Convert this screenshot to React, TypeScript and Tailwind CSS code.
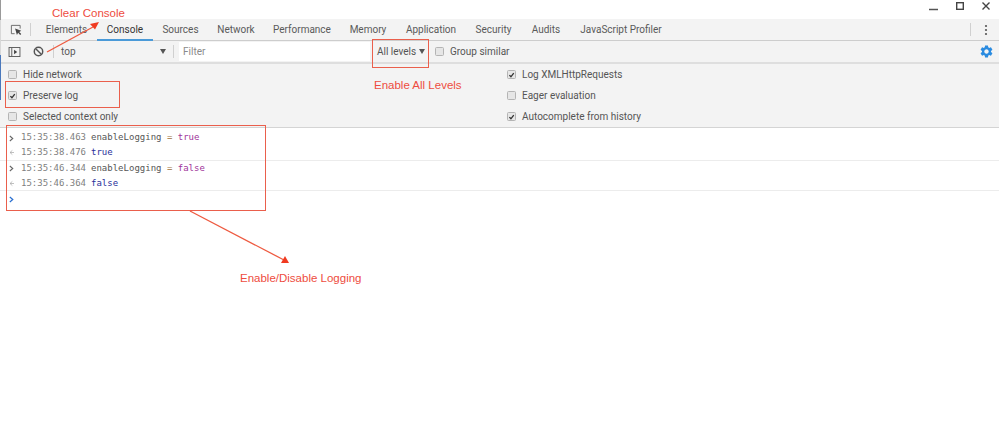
import { useState } from "react";

const TABS = ["Elements", "Console", "Sources", "Network", "Performance", "Memory", "Application", "Security", "Audits", "JavaScript Profiler"];

const tabWidth: Record<string, string> = {
  Elements: "w-[61px]",
  Console: "w-[56px]",
  Sources: "w-[55px]",
  Network: "w-[56px]",
  Performance: "w-[76px]",
  Memory: "w-[56px]",
  Application: "w-[70px]",
  Security: "w-[55px]",
  Audits: "w-[50px]",
  "JavaScript Profiler": "w-[100px]",
};

function Check({ label, checked }: { label: string; checked?: boolean }) {
  return (
    <div className="flex items-center h-[21px] gap-[6px] text-[10px] text-[#555]">
      <span className="flex items-center justify-center w-[9px] h-[9px] rounded-[1.5px] border border-[#b4b4b4] bg-[#e6e6e6]">
        {checked && (
          <svg viewBox="0 0 10 10" className="w-[8px] h-[8px]">
            <path d="M2 5.2 4.2 7.6 8.2 2.4" fill="none" stroke="#333" strokeWidth="1.9" />
          </svg>
        )}
      </span>
      <span className="whitespace-nowrap">{label}</span>
    </div>
  );
}

function Caret() {
  return (
    <svg viewBox="0 0 6 5" className="w-[6px] h-[5px]">
      <path d="M0 0H6L3 5Z" fill="#555" />
    </svg>
  );
}

function LogRow({ time, kind, children, last }: { time: string; kind: "in" | "out"; children: React.ReactNode; last?: boolean }) {
  return (
    <div className={`flex items-center pt-px ${last ? "h-[15.5px] border-b border-[#ececec]" : "h-[15px]"}`}>
      <span className="w-[21px] pl-[9px]">
        {kind === "in" ? (
          <svg viewBox="0 0 6 8" className="w-[5px] h-[7px]">
            <path d="M1 1 4.5 4 1 7" fill="none" stroke="#666" strokeWidth="1.3" />
          </svg>
        ) : (
          <svg viewBox="0 0 6 8" className="w-[5px] h-[7px]">
            <path d="M4 1.5 1.2 4 4 6.5M1.2 4H6" fill="none" stroke="#aaa" strokeWidth="0.9" />
          </svg>
        )}
      </span>
      <span className="text-[#808080] mr-[5px]">{time}</span>
      {children}
    </div>
  );
}

export default function App() {
  const [filter, setFilter] = useState("");

  return (
    <div className="relative w-[999px] h-[436px] overflow-hidden bg-white font-['Roboto',sans-serif]">
      {/* window buttons */}
      <div className="flex h-[19px] items-start justify-end bg-white">
        <svg viewBox="0 0 80 19" className="w-[80px] h-[19px]">
          <path d="M10 9.5H19" stroke="#555" strokeWidth="1.5" />
          <rect x="37.7" y="2.7" width="6.6" height="6.6" fill="none" stroke="#444" strokeWidth="1.4" />
          <path d="M63.5 2.5 70.5 9.5M70.5 2.5 63.5 9.5" stroke="#444" strokeWidth="1.4" />
        </svg>
      </div>

      {/* tab strip */}
      <div className="flex items-stretch h-[22px] bg-[#f3f3f3] border-b border-[#cdcdcd]">
        <div className="flex items-center w-[30px] shrink-0 pl-[10px]">
          <svg viewBox="0 0 13 13" className="w-[12px] h-[12px]">
            <path d="M5 10.5H1.5V1.5H11V5" fill="none" stroke="#666" strokeWidth="1" />
            <path d="M5.5 5 7.5 12 8.8 9.6 11 12 12.2 10.8 10 8.6 12.2 7.4Z" fill="#444" />
          </svg>
        </div>
        <div className="w-px h-[13px] self-center bg-[#d0d0d0]" />
        <div className="flex w-[5px] shrink-0" />
        {TABS.map((t) => (
          <div
            key={t}
            className={`flex items-center justify-center text-[10px] whitespace-nowrap ${tabWidth[t]} ${
              t === "Console" ? "text-[#333] border-b-2 border-[#4a9ad8] -mb-px" : "text-[#5a5a5a]"
            }`}
          >
            {t}
          </div>
        ))}
        <div className="flex-1" />
        <div className="w-px h-[13px] self-center bg-[#d0d0d0]" />
        <div className="flex items-center justify-center w-[28px] pl-[2px]">
          <svg viewBox="0 0 4 12" className="w-[4px] h-[12px]">
            <circle cx="2" cy="2" r="1.1" fill="#555" />
            <circle cx="2" cy="6" r="1.1" fill="#555" />
            <circle cx="2" cy="10" r="1.1" fill="#555" />
          </svg>
        </div>
      </div>

      {/* console toolbar */}
      <div className="flex items-center h-[23px] bg-[#f3f3f3] border-b-2 border-[#dedede]">
        <div className="flex items-center w-[33px] shrink-0 pl-[8px]">
          <svg viewBox="0 0 13 11" className="w-[13px] h-[10px]">
            <rect x="0.5" y="0.5" width="12" height="10" fill="none" stroke="#555" />
            <path d="M3.5 1V10" stroke="#555" />
            <path d="M6 3 9.5 5.5 6 8Z" fill="#444" />
          </svg>
        </div>
        <svg viewBox="0 0 12 12" className="w-[11px] h-[11px]">
          <circle cx="6" cy="6" r="4.6" fill="none" stroke="#555" strokeWidth="1.6" />
          <path d="M3 3 9 9" stroke="#555" strokeWidth="1.6" />
        </svg>
        <div className="w-px h-[13px] bg-[#d0d0d0] ml-[9px]" />
        <div className="flex items-center w-[119px] pl-[7px] pr-[7px] text-[10px] text-[#5a5a5a] justify-between">
          <span>top</span>
          <Caret />
        </div>
        <div className="w-px h-[13px] bg-[#d0d0d0] mr-[5px]" />
        <input
          value={filter}
          onChange={(e) => setFilter(e.target.value)}
          placeholder="Filter"
          className="w-[191px] h-[19px] bg-white pl-[4px] text-[10px] text-[#555] placeholder:text-[#8a8a8a] outline-none"
        />
        <div className="flex items-center w-[57px] h-full pl-[7px] gap-[3px] text-[10px] text-[#555] whitespace-nowrap">
          All levels <Caret />
        </div>
        <div className="ml-[8px]">
          <Check label="Group similar" />
        </div>
        <div className="flex-1" />
        <svg viewBox="0 0 24 24" className="w-[15px] h-[15px] mr-[5px]">
          <path
            fill="#2a8be0"
            d="M19.14 12.94c.04-.3.06-.61.06-.94 0-.32-.02-.64-.07-.94l2.03-1.58c.18-.14.23-.41.12-.61l-1.92-3.32c-.12-.22-.37-.29-.59-.22l-2.39.96c-.5-.38-1.03-.7-1.62-.94l-.36-2.54c-.04-.24-.24-.41-.48-.41h-3.84c-.24 0-.43.17-.47.41l-.36 2.54c-.59.24-1.13.57-1.62.94l-2.39-.96c-.22-.08-.47 0-.59.22L2.74 8.87c-.12.21-.08.47.12.61l2.03 1.58c-.05.3-.09.63-.09.94s.02.64.07.94l-2.03 1.58c-.18.14-.23.41-.12.61l1.92 3.32c.12.22.37.29.59.22l2.39-.96c.5.38 1.03.7 1.62.94l.36 2.54c.05.24.24.41.48.41h3.84c.24 0 .44-.17.47-.41l.36-2.54c.59-.24 1.13-.56 1.62-.94l2.39.96c.22.08.47 0 .59-.22l1.92-3.32c.12-.22.07-.47-.12-.61l-2.01-1.58zM12 15.6c-1.98 0-3.6-1.62-3.6-3.6s1.62-3.6 3.6-3.6 3.6 1.62 3.6 3.6-1.62 3.6-3.6 3.6z"
          />
        </svg>
      </div>

      {/* settings */}
      <div className="flex h-[64px] bg-[#f3f3f3] border-b border-[#d4d4d4]">
        <div className="w-[507px] pl-[8px]">
          <Check label="Hide network" />
          <Check label="Preserve log" checked />
          <Check label="Selected context only" />
        </div>
        <div>
          <Check label="Log XMLHttpRequests" checked />
          <Check label="Eager evaluation" />
          <Check label="Autocomplete from history" checked />
        </div>
      </div>

      {/* console output */}
      <div className="pt-[2px] font-['DejaVu_Sans_Mono',monospace] text-[9px] text-[#555]">
        <LogRow time="15:35:38.463" kind="in">
          <span>
            enableLogging <span className="text-[#a0703c]">=</span> <span className="text-[#a0359a]">true</span>
          </span>
        </LogRow>
        <LogRow time="15:35:38.476" kind="out" last>
          <span className="text-[#2a2f9a]">true</span>
        </LogRow>
        <LogRow time="15:35:46.344" kind="in">
          <span>
            enableLogging <span className="text-[#a0703c]">=</span> <span className="text-[#a0359a]">false</span>
          </span>
        </LogRow>
        <LogRow time="15:35:46.364" kind="out" last>
          <span className="text-[#2a2f9a]">false</span>
        </LogRow>
        <div className="h-[15px] pt-px pl-[9px] flex items-center">
          <svg viewBox="0 0 6 8" className="w-[5px] h-[7px]">
            <path d="M1 1 4.5 4 1 7" fill="none" stroke="#2a6fd0" strokeWidth="1.5" />
          </svg>
        </div>
      </div>

      {/* sliver of the window behind, along the left edge */}
      <div className="absolute left-0 top-0 flex flex-col w-px h-[100px]">
        <div className="h-[20px] bg-[#9a9a9a]" />
        <div className="h-[35px] bg-[#d8d8d8]" />
        <div className="h-[45px] bg-[#4a78bc]" />
      </div>

      {/* annotations drawn over the screenshot */}
      <div className="absolute left-[5px] top-[81px] w-[115px] h-[27px] border-[1.5px] border-[#ea5f4c]" />
      <div className="absolute left-[372px] top-[39px] w-[57px] h-[29px] border-[1.5px] border-[#ea5f4c]" />
      <div className="absolute left-[6px] top-[125px] w-[260px] h-[86px] border-[1.5px] border-[#ea5f4c]" />
      <span className="absolute left-[52px] top-[5px] text-[11.5px] text-[#ee4c40] font-['Liberation_Sans',sans-serif]">Clear Console</span>
      <span className="absolute left-[374px] top-[77px] text-[11.5px] text-[#ee4c40] font-['Liberation_Sans',sans-serif]">Enable All Levels</span>
      <span className="absolute left-[240px] top-[270px] text-[11.5px] text-[#ee4c40] font-['Liberation_Sans',sans-serif]">Enable/Disable Logging</span>
      <svg viewBox="0 0 999 436" className="absolute inset-0 w-[999px] h-[436px] pointer-events-none">
        <path d="M47 52 93 27" stroke="#ee5a40" strokeWidth="1.3" />
        <path d="M99 22 90 24 95 29.5Z" fill="#f03a20" />
        <path d="M190 211 284 260" stroke="#ee5a40" strokeWidth="1.3" />
        <path d="M285 256 289 263 281 263Z" fill="#f03a20" />
      </svg>
    </div>
  );
}
